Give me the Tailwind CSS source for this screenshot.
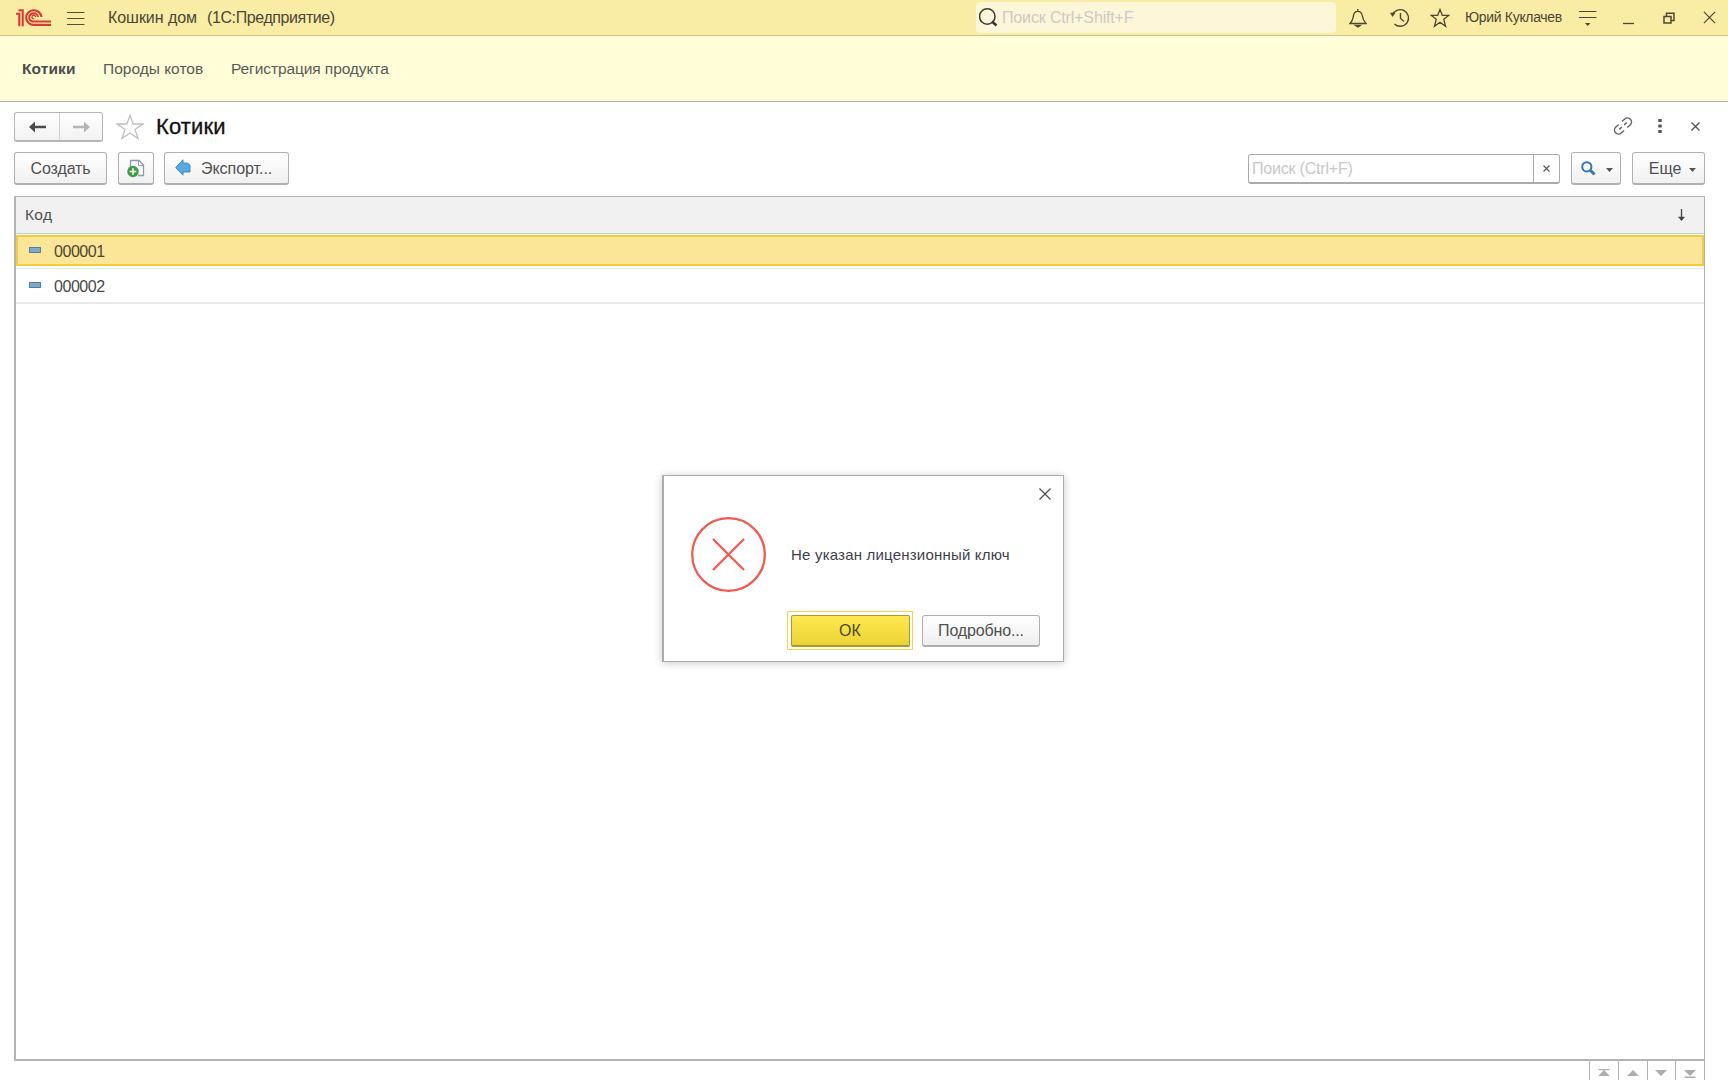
<!DOCTYPE html>
<html lang="ru">
<head>
<meta charset="utf-8">
<title>Кошкин дом</title>
<script src="https://cdn.jsdelivr.net/npm/@tailwindcss/browser@4"></script>
</head>
<body class="relative flex h-[1080px] w-[1728px] flex-col overflow-hidden bg-white font-['Liberation_Sans',Arial,sans-serif] text-[16px] whitespace-nowrap text-[#505050]">

<header class="flex h-9 shrink-0 items-center border-b border-[#cfc37c] bg-[#f9eca4] pl-4">
  <svg class="h-[18px] w-[35px]" viewBox="0 0 35 18" fill="none" stroke="#d63a34" stroke-width="2.100">
    <path d="M0 4.700H3.300V17.200M2.500 1.300H6.700V17.200"/>
    <path d="M25.500 8A7.700 7.300 0 1 0 18 15.900H35"/>
    <path d="M22 8A4.400 4.100 0 1 0 18 12.500H35"/>
    <path d="M19.600 8A1.800 1.800 0 1 0 18.200 9.800" stroke-width="1.300"/>
  </svg>
  <svg class="ml-4 h-4 w-[18px]" viewBox="0 0 18 16" stroke="#555038" stroke-width="1.200"><path d="M0 2.500H17.500M0 8.500H17.500M0 14.500H17.500"/></svg>
  <span class="ml-[23px] flex w-[240px] gap-[10px] text-[16px] text-[#4b4737]"><span class="tracking-[-0.050px]">Кошкин дом</span><span class="tracking-[-0.400px]">(1С:Предприятие)</span></span>
  <div class="ml-[628px] flex h-[31px] w-[360px] items-center rounded-sm bg-[#fdf6d8] pl-[3px]">
    <svg class="size-[19px]" viewBox="0 0 19 19" fill="none" stroke="#3c3a30"><circle cx="8.300" cy="8.500" r="7.700" stroke-width="1.500"/><path d="M13 13.500 17.500 17.500" stroke-width="2.600"/></svg>
    <span class="ml-1 text-[16px] tracking-[-0.150px] text-[#cdc9c6]">Поиск Ctrl+Shift+F</span>
  </div>
  <svg class="ml-[13px] h-5 w-[18px]" viewBox="0 0 18 20" fill="none" stroke="#4c4833" stroke-width="1.300"><path d="M8.800 1V3M1 15.500C4 12.500 3.800 11 4.500 7.500 5.200 2 12.500 2 13.200 7.500 13.800 11 14 12.500 17 15.500Z"/><path d="M6.500 17.500H11.200L9 19Z" fill="#4c4833"/></svg>
  <svg class="ml-[23px] h-5 w-5" viewBox="0 0 20 20" fill="none" stroke="#4c4833" stroke-width="1.400"><path d="M2.500 7A8.300 8.300 0 1 1 4.500 15.900"/><path d="M10.500 5V10.500L14 13.500"/><path d="M.5 5 5 5 2.500 8.500Z" fill="#4c4833" stroke-width=".6"/></svg>
  <svg class="ml-5 h-5 w-5" viewBox="0 0 20 20" fill="none" stroke="#4c4833" stroke-width="1.300"><path d="M10 1.500 12.300 7.300H19L13.700 11.200 15.600 18.300 10 14.300 4.400 18.300 6.300 11.200 1 7.300H7.700Z"/></svg>
  <span class="ml-[15px] w-[98px] text-[14px] tracking-[-0.320px] text-[#4b4737]">Юрий Куклачев</span>
  <svg class="ml-4 h-4 w-[18px]" viewBox="0 0 18 16" stroke="#4c4833" stroke-width="1.200"><path d="M0 1.500H17.500M0 7.500H17.500"/><path d="M6 13H11.500L8.700 16Z" fill="#4c4833" stroke="none"/></svg>
  <svg class="ml-[25px] h-4 w-3" viewBox="0 0 12 16"><path d="M1 13.500H12" stroke="#4c4833" stroke-width="1.300"/></svg>
  <svg class="ml-[29px] size-3" viewBox="0 0 12 12" fill="none" stroke="#4c4833" stroke-width="1.500"><path d="M1 4.500H8V11H1ZM3.500 4V1.200H11V8.500H8"/></svg>
  <svg class="ml-[28px] size-[13px]" viewBox="0 0 14 14" stroke="#4c4833" stroke-width="1.300"><path d="M1 1 13 13M13 1 1 13"/></svg>
</header>

<nav class="flex h-[66px] shrink-0 items-center border-b border-[#b7b7a6] bg-[#fffed9] pl-[22px] text-[15.500px] text-[#5a5a55]">
  <span class="w-[81px] font-bold tracking-[0.100px] text-[#4d4d49]">Котики</span>
  <span class="w-[128px]">Породы котов</span>
  <span class="tracking-[-0.090px]">Регистрация продукта</span>
</nav>

<main class="flex min-h-0 grow flex-col pt-[10px] pr-[23px] pl-[14px]">
  <div class="flex h-[30px] shrink-0 items-center">
    <div class="flex h-[30px] w-[89px] rounded-[3px] border border-b-2 border-[#b5b5b5] bg-linear-to-b from-white to-[#f2f2f2]">
      <div class="flex w-[45px] items-center justify-center border-r border-[#d0d0d0]"><svg class="h-3 w-[17px]" viewBox="0 0 17 12"><path d="M0 6 6 .5V4.700H17V7.300H6V11.500Z" fill="#4a4a4a"/></svg></div>
      <div class="flex grow items-center justify-center"><svg class="h-3 w-[17px]" viewBox="0 0 17 12"><path d="M17 6 11 .5V4.800H0V7.200H11V11.500Z" fill="#b5b5b5"/></svg></div>
    </div>
    <svg class="ml-[13px] h-[26px] w-7" viewBox="0 0 28 26" fill="none" stroke="#bfbfc3" stroke-width="1.300"><path d="M14 1.500 17.200 10H26.800L19 15.500 22 24.500 14 19 6 24.500 9 15.500 1.200 10H10.800Z"/></svg>
    <h1 class="ml-3 text-[22px] leading-none tracking-[0.150px] text-[#111] [-webkit-text-stroke:0.3px_#111]">Котики</h1>
    <svg class="mr-[25px] mb-[2px] ml-auto size-5" viewBox="0 0 20 20" fill="none" stroke="#666" stroke-width="1.500"><g transform="rotate(-42 10 10)"><path d="M7.800 14H4A4 4 0 0 1 4 6H7.800M12.200 6H16A4 4 0 0 1 16 14H12.200M5 10H8.500M11.500 10H15"/></g></svg>
    <svg class="mr-[29px] mb-[2px] h-[14px] w-1" viewBox="0 0 4 14" fill="#555"><path d="M.3 0H3.700V3H.3ZM.3 5.500H3.700V8.500H.3ZM.3 11H3.700V14H.3Z"/></svg>
    <svg class="mr-[5px] mb-[2px] size-[9px]" viewBox="0 0 9 9" stroke="#555" stroke-width="1.400"><path d="M.5 .5 8.500 8.500M8.500 .5 .5 8.500"/></svg>
  </div>

  <div class="mt-[10px] flex h-[33px] shrink-0 items-center">
    <button class="flex h-[33px] w-[93px] items-center justify-center rounded-[3px] border border-b-2 border-[#b0b0b0] bg-linear-to-b from-white to-[#f0f0f0] pt-px tracking-[-0.100px]">Создать</button>
    <button class="ml-[11px] flex h-[33px] w-9 items-center justify-center rounded-[3px] border border-b-2 border-[#b0b0b0] bg-linear-to-b from-white to-[#f0f0f0]">
      <svg class="h-[19px] w-[18px]" viewBox="0 0 18 19" fill="none"><path d="M3.500 8V1.500H12L16.500 6V16.500H11" fill="#fafcff" stroke="#8c9bb0" stroke-width="1.300"/><path d="M11.500 1.500V6.500H16.500" stroke="#8c9bb0"/><circle cx="6" cy="12.500" r="5.700" fill="#3f9f40"/><path d="M6 9.200V15.800M2.700 12.500H9.300" stroke="#fff" stroke-width="1.500"/></svg>
    </button>
    <button class="ml-[10px] flex h-[33px] w-[125px] items-center rounded-[3px] border border-b-2 border-[#b0b0b0] bg-linear-to-b from-white to-[#f0f0f0] pl-[10px]">
      <svg class="mb-px h-[17px] w-4" viewBox="0 0 16 17"><path d="M.7 8.500 8 .8V4H12.500L15 6V13H8V16.200Z" fill="#58aae6" stroke="#3d82b8" stroke-width=".9"/></svg>
      <span class="ml-[10px] pt-px tracking-[-0.050px]">Экспорт...</span>
    </button>
    <div class="ml-auto flex h-[30px] w-[312px] items-center rounded-[3px] border border-b-2 border-[#ababab] pl-[3px]">
      <span class="grow pt-px tracking-[-0.200px] text-[#c8c8c8]">Поиск (Ctrl+F)</span>
      <span class="flex h-full w-[26px] items-center justify-center border-l border-[#ababab] pr-px"><svg class="size-[7px]" viewBox="0 0 7 7" stroke="#555" stroke-width="1.200"><path d="M.5 .5 6.500 6.500M6.500 .5 .5 6.500"/></svg></span>
    </div>
    <button class="ml-[11px] flex h-[33px] w-[50px] items-center rounded-[3px] border border-b-2 border-[#b0b0b0] bg-linear-to-b from-white to-[#f0f0f0] pl-[9px]">
      <svg class="size-[15px]" viewBox="0 0 15 15" fill="none" stroke="#3577ae"><circle cx="5.800" cy="5.800" r="4.600" stroke-width="2"/><path d="M9.300 9.300 13.500 13.500" stroke-width="3"/></svg>
      <svg class="mt-1 ml-[10px] h-1 w-[7px]" viewBox="0 0 7 4"><path d="M0 0H7L3.500 4Z" fill="#555"/></svg>
    </button>
    <button class="ml-[11px] flex h-[33px] w-[73px] items-center rounded-[3px] border border-b-2 border-[#b0b0b0] bg-linear-to-b from-white to-[#f0f0f0] pl-[15px]">
      <span class="w-[34px] pt-px">Еще</span>
      <svg class="mt-1 ml-[7px] h-1 w-[7px]" viewBox="0 0 7 4"><path d="M0 0H7L3.500 4Z" fill="#555"/></svg>
    </button>
  </div>

  <section class="mt-[11px] flex h-[865px] shrink-0 flex-col border border-b-2 border-l-2 border-[#b4b4b4]">
    <div class="flex h-[37px] shrink-0 items-center justify-between border-b border-[#c9cdd2] bg-[#f1f1f1] pr-[19px] pl-[9px] text-[15.500px]">
      <span class="pb-px tracking-[0.300px]">Код</span>
      <svg class="h-3 w-[7px]" viewBox="0 0 7 12"><path d="M3.500 0V11" stroke="#444" stroke-width="1.300"/><path d="M0 7.800H7L3.500 12Z" fill="#444"/></svg>
    </div>
    <div class="mt-px flex h-[31px] shrink-0 items-center border-2 border-[#f4cb3d] bg-[#fbe697] pl-[11px] text-[#4b4535]">
      <span class="mb-[2px] h-[6px] w-3 border border-[#557d9c] bg-[#7fa9cb]"></span><span class="ml-[13px] pt-[3px] tracking-[-0.450px]">000001</span>
    </div>
    <div class="mt-[2px] flex h-9 shrink-0 items-center border-t border-b-2 border-[#e8e8e8] pl-[13px] text-[#484848]">
      <span class="mb-[2px] h-[6px] w-3 border border-[#557d9c] bg-[#7fa9cb]"></span><span class="ml-[13px] pt-[3px] tracking-[-0.450px]">000002</span>
    </div>
  </section>

  <div class="ml-auto grid h-[19px] w-[116px] shrink-0 grid-cols-4 border-r border-[#b4b4b4]">
    <div class="flex justify-center border-l border-[#b4b4b4] pt-2"><svg class="h-[7px] w-3" viewBox="0 0 12 7" fill="#adadad"><path d="M.5 0H11.500V1.200H.5ZM6 1 12 7H0Z"/></svg></div>
    <div class="flex justify-center border-l border-[#b4b4b4] pt-[9px]"><svg class="h-[6px] w-3" viewBox="0 0 12 6" fill="#adadad"><path d="M6 0 12 6H0Z"/></svg></div>
    <div class="flex justify-center border-l border-[#b4b4b4] pt-[9px]"><svg class="h-[6px] w-3" viewBox="0 0 12 6" fill="#adadad"><path d="M0 0H12L6 6Z"/></svg></div>
    <div class="flex justify-center border-l border-[#b4b4b4] pt-[9px]"><svg class="h-2 w-3" viewBox="0 0 12 8" fill="#adadad"><path d="M0 0H12L6 6ZM.5 6.500H11.500V8H.5Z"/></svg></div>
  </div>
</main>

<div role="dialog" class="absolute top-[475px] left-[662px] flex h-[187px] w-[402px] flex-col border border-l-2 border-[#ababab] bg-white shadow-[0_1px_8px_rgba(0,0,0,0.22)]">
  <div class="flex h-9 shrink-0 justify-end pt-3 pr-3"><svg class="size-3" viewBox="0 0 13 13" stroke="#4d4d4d" stroke-width="1.300"><path d="M.5 .5 12.500 12.500M12.500 .5 .5 12.500"/></svg></div>
  <div class="mt-[5px] flex h-[76px] shrink-0 items-center pl-[27px]">
    <svg class="size-[76px]" viewBox="0 0 76 76" fill="none" stroke="#f15b52" stroke-width="2.300"><circle cx="37.500" cy="37.500" r="36.300"/><path d="M22 22 53 53M53 22 22 53"/></svg>
    <span class="ml-[24px] text-[15px] tracking-[0.200px] text-[#3e3e4c]">Не указан лицензионный ключ</span>
  </div>
  <div class="mt-[18px] flex items-center pl-[123px]">
    <div class="flex h-[39px] w-[126px] items-center justify-center border border-[#f6d34b]"><button class="h-8 w-[119px] rounded-[2px] border border-b-2 border-[#a99a2b] bg-linear-to-b from-[#ffe94f] to-[#ead335] pt-px text-[#4c4829]">ОК</button></div>
    <button class="ml-[9px] h-8 w-[118px] rounded-[3px] border border-b-2 border-[#b0b0b0] bg-linear-to-b from-white to-[#eeeeee] pt-px tracking-[-0.150px]">Подробно...</button>
  </div>
</div>
</body>
</html>
